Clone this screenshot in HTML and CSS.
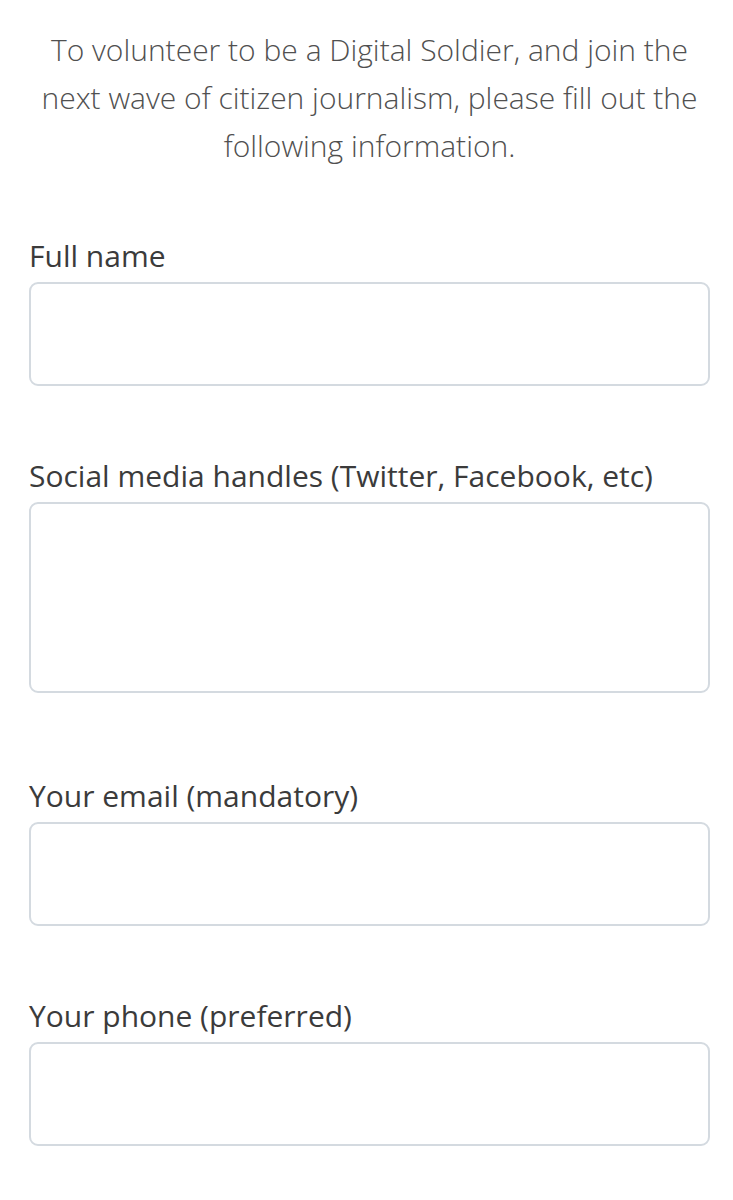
FILE: index.html
```html
<!DOCTYPE html>
<html>
<head>
<meta charset="utf-8">
<link rel="stylesheet" href="styles.css">
</head>
<body>
<div class="page">
  <p class="intro">To volunteer to be a Digital Soldier, and join the next wave of citizen journalism, please fill out the following information.</p>
  <form class="form">
    <div class="field">
      <label class="label">Full name</label>
      <input class="input" type="text">
    </div>
    <div class="field">
      <label class="label">Social media handles (Twitter, Facebook, etc)</label>
      <textarea class="input textarea"></textarea>
    </div>
    <div class="field field-email">
      <label class="label">Your email (mandatory)</label>
      <input class="input" type="text">
    </div>
    <div class="field">
      <label class="label">Your phone (preferred)</label>
      <input class="input" type="text">
    </div>
  </form>
</div>
</body>
</html>
```
FILE: styles.css
```css
html, body {
  margin: 0;
  padding: 0;
  background: #ffffff;
}
.page {
  padding: 26px 23px 0 29px;
  font-family: "Open Sans", "Liberation Sans", sans-serif;
}
.intro {
  margin: 0;
  text-align: center;
  font-weight: 300;
  font-size: 30px;
  line-height: 48px;
  color: #505050;
}
.form {
  margin-top: 68px;
  display: flex;
  flex-direction: column;
  gap: 72px;
}
.field {
  display: flex;
  flex-direction: column;
  gap: 8px;
}
.field-email {
  margin-top: 13px;
}
.label {
  font-size: 30px;
  line-height: 36px;
  color: #3b3b3b;
}
.input {
  box-sizing: border-box;
  display: block;
  width: 100%;
  height: 104px;
  margin: 0;
  border: 2px solid #d4dae0;
  border-radius: 9px;
  background: #fff;
  font: inherit;
  outline: none;
}
.textarea {
  height: 191px;
  resize: none;
}
```
